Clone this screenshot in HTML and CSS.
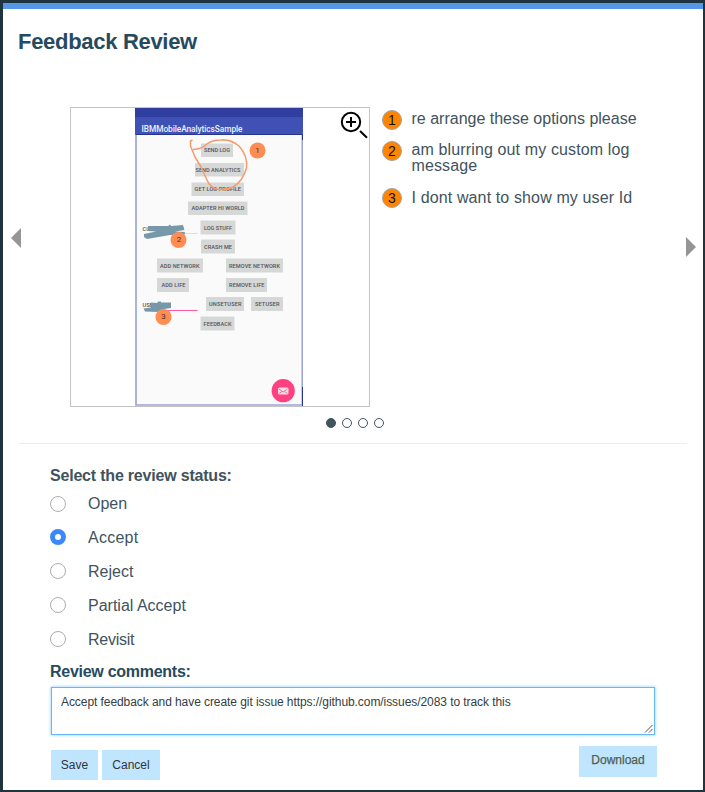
FILE: index.html
```html
<!DOCTYPE html>
<html lang="en">
<head>
<meta charset="utf-8">
<title>Feedback Review</title>
<link rel="stylesheet" href="styles.css">
</head>
<body>
<main class="dialog">
  <h1 class="title"><span>Feedback Review</span></h1>
  <section class="carousel">
    <svg class="arrow prev" viewBox="0 0 10 20"><path d="M10 0V20L0 10Z"/></svg>
    <div class="preview">
      <svg class="phone" viewBox="135 108 168 298">
        <rect x="135" y="108" width="168" height="298" fill="#fafafa"/>
        <rect x="135" y="108" width="168" height="27" fill="#3f51b5"/>
        <rect x="135" y="108" width="168" height="9" fill="#303f9f"/>
        <path d="M136 134V405H302.3V134" fill="none" stroke="#9fa5d2" stroke-width="1.7"/>
        <path d="M135.500 134.500H302.500V140M302.500 387V406" fill="none" stroke="#26358e"/>
        <text x="141.500" y="131.500" class="app" textLength="101">IBMMobileAnalyticsSample</text>
        <g class="keys">
          <rect x="201" y="143.500" width="32" height="13.500"/><rect x="195" y="163" width="49" height="13.500"/>
          <rect x="191.500" y="182.500" width="52.500" height="13.500"/><rect x="188" y="201.500" width="59.500" height="13.500"/>
          <rect x="200.500" y="220.500" width="35" height="14"/><rect x="201" y="239.500" width="34" height="14"/>
          <rect x="157" y="258.500" width="46" height="14"/><rect x="226" y="258.500" width="57" height="14"/>
          <rect x="157" y="278" width="32" height="14"/><rect x="226" y="278" width="41" height="14"/>
          <rect x="206" y="297" width="38" height="14"/><rect x="251" y="297" width="32" height="14"/>
          <rect x="200.500" y="316.500" width="34" height="14"/>
        </g>
        <g class="labels">
          <text x="204" y="152.300" textLength="26">SEND LOG</text>
          <text x="195.500" y="172" textLength="45">SEND ANALYTICS</text>
          <text x="194.500" y="191.300" textLength="46.500">GET LOG PROFILE</text>
          <text x="191.500" y="210.300" textLength="53">ADAPTER HI WORLD</text>
          <text x="204" y="229.700" textLength="28">LOG STUFF</text>
          <text x="204" y="248.700" textLength="28">CRASH ME</text>
          <text x="160" y="267.900" textLength="39.500">ADD NETWORK</text>
          <text x="229" y="267.900" textLength="51">REMOVE NETWORK</text>
          <text x="161.500" y="287.300" textLength="24">ADD LIFE</text>
          <text x="229" y="287.300" textLength="35.500">REMOVE LIFE</text>
          <text x="209" y="306.300" textLength="32.500">UNSETUSER</text>
          <text x="255" y="306.300" textLength="24.500">SETUSER</text>
          <text x="203.500" y="325.700" textLength="28">FEEDBACK</text>
          <text x="142.500" y="230.500">CU</text>
          <text x="142.500" y="307">USE</text>
        </g>
        <path d="M180 233.500H197.500" stroke="#ddd"/>
        <path d="M155 310.500H197.500" stroke="#ff5a9a"/>
        <path d="M148 226L168 226L170 224.500L171 226L183 225L184.500 230L175 231.500L185 232L184 236L170 235L147 239L144 237L144 234L156 231.500L148 231Z" fill="#7798a8"/>
        <path d="M151 302.500L157 303L158 301.500H161V302.500H171V308L164 309L158 312L145 311.500L143.500 308.500L151 307.500Z" fill="#7798a8"/>
        <g class="scribble">
          <path d="M192.500 140L190.500 141V146L195 157L201 167L207 180Q210 188 219 189.500Q227 190 233 187Q243 181 246.500 168Q248 156 239 146Q230 139 221 140Q212 140 207 144Q202 149 193 149.500"/>
        </g>
        <g class="pins">
          <circle cx="257.500" cy="150.500" r="8"/><text x="257.500" y="152.500">1</text>
          <circle cx="178.500" cy="240" r="8"/><text x="179" y="241.500">2</text>
          <circle cx="163.500" cy="317" r="8"/><text x="163.500" y="318.800">3</text>
        </g>
        <circle cx="283.200" cy="390.700" r="11.600" fill="#ff4081"/>
        <rect x="278" y="387.500" width="10.500" height="7" rx="1.500" fill="#f8dce3"/>
        <path d="M279 389L283.200 392L287.500 389M279 393.500L282 391.500M287.500 393.500L284.500 391.500" fill="none" stroke="#da638b" stroke-width=".8"/>
      </svg>
      <svg class="zoom" viewBox="0 0 28 28"><circle cx="11" cy="11" r="9.200" stroke-width="2"/><path d="M11 6V16M6 11H16" stroke-width="2"/><path d="M20 20L27 26.700" stroke-width="2"/></svg>
    </div>
    <ol class="notes">
      <li><b class="num">1</b><span class="n1">re arrange these options please</span></li>
      <li><b class="num">2</b><span class="n2">am blurring out my custom log<br>message</span></li>
      <li><b class="num">3</b><span class="n3">I dont want to show my user Id</span></li>
    </ol>
    <svg class="arrow next" viewBox="0 0 10 20"><path d="M0 0V20L10 10Z"/></svg>
  </section>
  <div class="dots"><i class="on"></i><i></i><i></i><i></i></div>
  <form class="review">
    <h2 class="legend">Select the review status:</h2>
    <label class="option first"><i class="radio"></i><span>Open</span></label>
    <label class="option"><i class="radio checked"></i><span class="wide">Accept</span></label>
    <label class="option"><i class="radio"></i><span>Reject</span></label>
    <label class="option"><i class="radio"></i><span>Partial Accept</span></label>
    <label class="option"><i class="radio"></i><span class="tight">Revisit</span></label>
    <h2 class="comments">Review comments:</h2>
    <div class="field"><span>Accept feedback and have create git issue https://github.com/issues/2083 to track this</span>
      <svg class="grip" viewBox="0 0 9 9"><path d="M1 8.500L8.500 1M5 8.500L8.500 5"/></svg>
    </div>
    <div class="actions">
      <button type="button" class="save">Save</button>
      <button type="button" class="cancel">Cancel</button>
      <button type="button" class="download">Download</button>
    </div>
  </form>
</main>
</body>
</html>
```
FILE: styles.css
```css
* { box-sizing: border-box; }
body { margin: 0; font-family: "Liberation Sans", Arial, sans-serif; color: #41535d; }
.dialog { width: 705px; height: 792px; border: 3px solid #20343f; border-right-width: 2px; border-bottom-width: 2px; background: #fff; overflow: hidden; }
.title { margin: 0; height: 104px; border-top: 6px solid #5596e6; padding: 20px 0 0 15px; font-size: 22px; line-height: 26px; letter-spacing: -.3px; color: #264a60; }
.carousel { display: flex; height: 300px; }
.arrow { width: 10px; height: 20px; fill: #959595; flex: none; }
.prev { margin: 121px 49px 0 8px; }
.next { margin: 130px 7px 0 auto; }
.preview { position: relative; flex: none; width: 300px; height: 300px; border: 1px solid #c4c4c4; }
.phone { display: block; width: 168px; height: 298px; margin-left: 64px; }
.app { font: 500 8.300px Roboto, sans-serif; fill: #eef0fa; }
.keys { fill: #d6d7d7; }
.labels { font: 500 5.600px Roboto, sans-serif; fill: #555; }
.scribble { fill: none; stroke: #f59b6d; stroke-width: 1.500; stroke-linejoin: round; }
.pins { fill: #ff8c52; font: 8px Roboto, sans-serif; text-anchor: middle; }
.pins text { fill: #4a2e20; }
.zoom { position: absolute; left: 269px; top: 3px; width: 28px; height: 28px; fill: none; stroke: #000; }
.notes { list-style: none; margin: 3px 0 0 12px; padding: 0; font-size: 16px; line-height: 16px; }
.notes li { display: flex; gap: 9.500px; margin-bottom: 11px; }
.notes li:nth-child(2) { margin-bottom: 14px; }
.notes span { padding-top: 1px; }
.n2, .n3 { letter-spacing: .13px; }
.notes .n3 { padding-top: 2px; }
.num { width: 20px; height: 20px; border: 1px solid #a5a3a0; border-radius: 50%; background: #ff8400; color: #111; font-size: 14px; font-weight: 400; line-height: 19px; text-align: center; flex: none; }
.dots { display: flex; gap: 6px; height: 37px; margin: 0 16px; padding: 11px 0 0 307px; border-bottom: 1px solid #ececec; }
.dots i { width: 10px; height: 10px; border: 1px solid #41535d; border-radius: 50%; }
.dots .on { background: #41535d; }
.review { padding: 22px 48px 0 47px; }
.legend, .comments { margin: 0; font-size: 16px; line-height: 20px; }
.legend { height: 21px; letter-spacing: -.2px; }
.comments { height: 21px; margin-top: 5px; color: #264a60; letter-spacing: -.27px; }
.option { display: flex; align-items: center; gap: 22px; height: 34px; font-size: 16px; }
.radio { width: 16px; height: 16px; margin-bottom: 2px; border: 1px solid #adadad; border-radius: 50%; }
.first .radio { margin-bottom: 0; }
.radio.checked { border: 5.500px solid #3b88fd; }
.wide { letter-spacing: .25px; }
.tight { letter-spacing: -.25px; }
.field { position: relative; height: 48px; margin: 4px 0 15px 1px; padding: 6px 9px; border: 1px solid #66b9f6; box-shadow: 0 0 3px #7cc7ff; font-size: 12px; line-height: 16px; letter-spacing: -.07px; color: #333d42; }
.grip { position: absolute; right: 1px; bottom: 1px; width: 9px; height: 9px; fill: none; stroke: #555; }
.actions { display: flex; gap: 4px; padding-left: 1px; }
button { height: 30px; border: 0; padding: 0; background: #c0e6ff; color: #333; font: 12px "Liberation Sans", sans-serif; }
.save { width: 47px; }
.cancel { width: 58px; }
.download { width: 78px; height: 31px; margin: -4px -2px 0 auto; padding-bottom: 3px; color: #4f604f; -webkit-text-stroke: .25px; }
```
